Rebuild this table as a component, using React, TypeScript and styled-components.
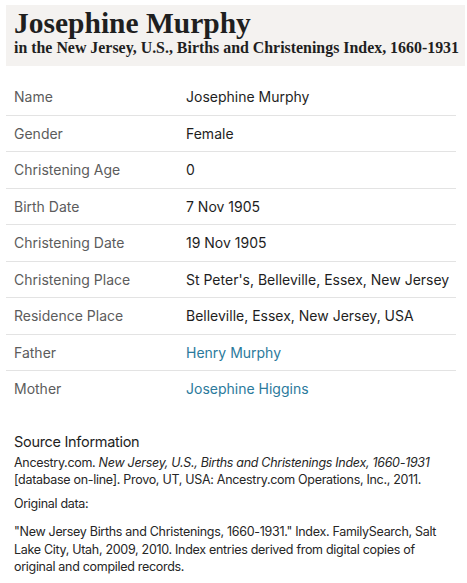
import React from "react";
import styled, { createGlobalStyle } from "styled-components";

const Global = createGlobalStyle`
  html, body { margin: 0; padding: 0; background: #ffffff; }
  body { font-family: Inter, "Liberation Sans", Arial, sans-serif; color: #1e1e1e; }
`;

const Page = styled.div`
  padding: 5px 2px 0 6px;
`;

const Header = styled.header`
  background: #f4f2f0;
  padding: 3px 0 8px 8px;
`;

const Title = styled.h1`
  margin: 0;
  font-family: "Liberation Serif", "Times New Roman", serif;
  font-weight: 700;
  font-size: 29.5px;
  line-height: 30px;
  color: #1f1f1f;
  white-space: nowrap;
`;

const Subtitle = styled.h2`
  margin: 0;
  font-family: "Liberation Serif", "Times New Roman", serif;
  font-weight: 700;
  font-size: 15.9px;
  line-height: 20px;
  color: #1f1f1f;
  white-space: nowrap;
`;

const Table = styled.div`
  margin-top: 13px;
  width: 450px;
  display: flex;
  flex-direction: column;
`;

const Row = styled.div`
  display: grid;
  grid-template-columns: 172px 1fr;
  padding: 9px 0 9px 8px;
  line-height: 17.5px;
  font-size: 14px;
  border-bottom: 1px solid #e3e3e3;
  &:last-child { border-bottom: none; }
`;

const Label = styled.span`
  color: #5c5c5c;
`;

const Value = styled.span<{ $link?: boolean }>`
  color: ${(p) => (p.$link ? "#2b7a9c" : "#1e1e1e")};
`;

const Source = styled.section`
  margin-top: 26px;
  padding-left: 8px;
  padding-right: 10px;
`;

const SourceTitle = styled.h3`
  margin: 0 0 3px 0;
  font-size: 14.5px;
  letter-spacing: -0.3px;
  font-weight: 400;
  line-height: 18px;
  color: #1e1e1e;
`;

const Para = styled.p<{ $gap: number }>`
  margin: 0 0 ${(p) => p.$gap}px 0;
  font-size: 12.5px;
  letter-spacing: -0.3px;
  line-height: 17.5px;
  color: #262626;
`;

const rows: { label: string; value: string; link?: boolean }[] = [
  { label: "Name", value: "Josephine Murphy" },
  { label: "Gender", value: "Female" },
  { label: "Christening Age", value: "0" },
  { label: "Birth Date", value: "7 Nov 1905" },
  { label: "Christening Date", value: "19 Nov 1905" },
  { label: "Christening Place", value: "St Peter's, Belleville, Essex, New Jersey" },
  { label: "Residence Place", value: "Belleville, Essex, New Jersey, USA" },
  { label: "Father", value: "Henry Murphy", link: true },
  { label: "Mother", value: "Josephine Higgins", link: true },
];

export default function App() {
  return (
    <Page>
      <Global />
      <Header>
        <Title>Josephine Murphy</Title>
        <Subtitle>in the New Jersey, U.S., Births and Christenings Index, 1660-1931</Subtitle>
      </Header>
      <Table>
        {rows.map((r) => (
          <Row key={r.label}>
            <Label>{r.label}</Label>
            <Value $link={r.link}>{r.value}</Value>
          </Row>
        ))}
      </Table>
      <Source>
        <SourceTitle>Source Information</SourceTitle>
        <Para $gap={6}>
          Ancestry.com. <i>New Jersey, U.S., Births and Christenings Index, 1660-1931</i>
          <br />
          [database on-line]. Provo, UT, USA: Ancestry.com Operations, Inc., 2011.
        </Para>
        <Para $gap={11}>Original data:</Para>
        <Para $gap={0}>
          "New Jersey Births and Christenings, 1660-1931." Index. FamilySearch, Salt
          <br />
          Lake City, Utah, 2009, 2010. Index entries derived from digital copies of
          <br />
          original and compiled records.
        </Para>
      </Source>
    </Page>
  );
}
